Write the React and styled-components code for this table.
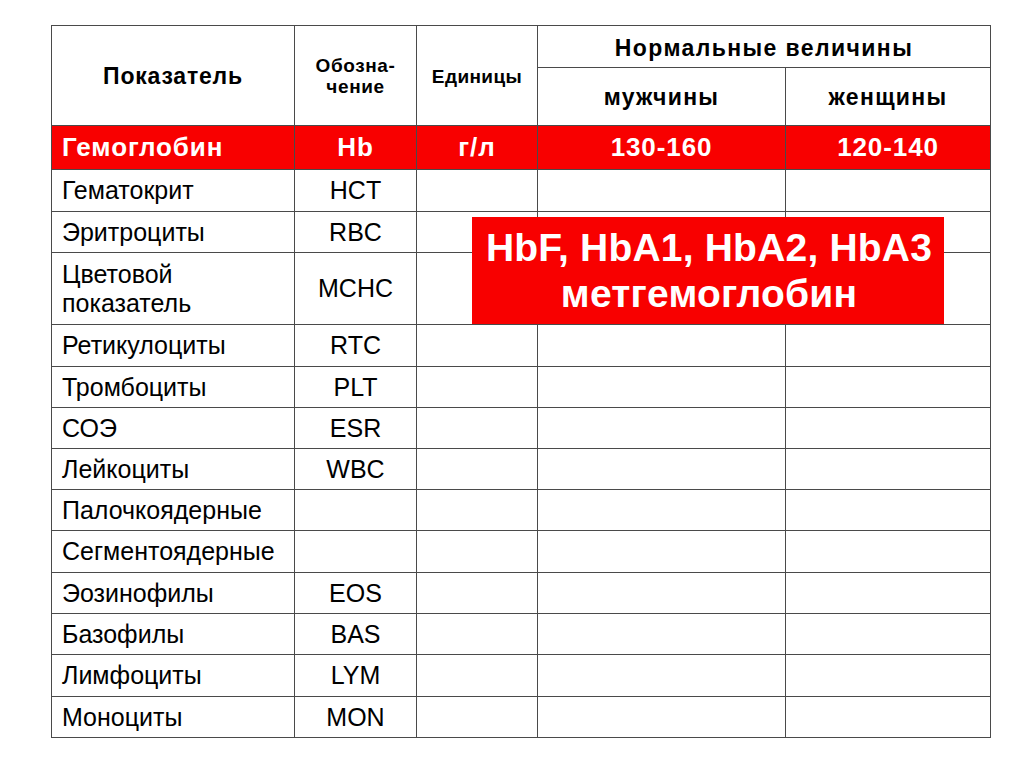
import React from "react";
import styled, { createGlobalStyle } from "styled-components";

const GlobalStyle = createGlobalStyle`
    html, body {
        margin: 0;
        padding: 0;
        background: #fff;
    }
    body {
        font-family: "Liberation Sans", Arial, sans-serif;
        color: #000;
    }
`

const Page = styled.div`
    width: 1024px;
    height: 768px;
    padding: 25px 0 0 51px;
    box-sizing: border-box;
`

const TableWrap = styled.div`
    position: relative;
    width: 939px;
`

const Table = styled.table`
    border-collapse: collapse;
    table-layout: fixed;
    width: 939px;
`

const Cell = styled.td`
    border: 1px solid #4a4a4a;
    padding: 0 10px;
    font-size: 25px;
    line-height: 29px;
    text-align: ${p => (p.$left ? "left" : "center")};
    vertical-align: middle;
`

const HeadCell = styled.th`
    border: 1px solid #4a4a4a;
    padding: ${p => p.$pt || 0}px 0 0;
    font-weight: bold;
    font-size: ${p => p.$size}px;
    line-height: ${p => p.$lh || p.$size + 3}px;
    letter-spacing: ${p => p.$ls || 0}px;
    text-align: center;
    vertical-align: ${p => p.$valign || "middle"};
`

const Row = styled.tr`
    height: ${p => p.$h}px;
`

const RedRow = styled.tr`
    height: 44px;
    background: #f80000;
    color: #fff;

    td {
        font-weight: bold;
        font-size: 26px;
        letter-spacing: 0.9px;
    }
`

const Overlay = styled.div`
    position: absolute;
    left: 421px;
    top: 192px;
    width: 472px;
    height: 107px;
    background: #f80000;
    color: #fff;
    font-weight: bold;
    font-size: 39px;
    line-height: 46px;
    letter-spacing: 0.2px;
    display: flex;
    flex-direction: column;
    align-items: center;
    justify-content: center;
    padding-left: 2px;
    box-sizing: border-box;
`

const rows = [
    ["Гематокрит", "HCT", 42],
    ["Эритроциты", "RBC", 41],
    ["Цветовой\nпоказатель", "MCHC", 72],
    ["Ретикулоциты", "RTC", 42],
    ["Тромбоциты", "PLT", 41],
    ["СОЭ", "ESR", 41],
    ["Лейкоциты", "WBC", 41],
    ["Палочкоядерные", "", 41],
    ["Сегментоядерные", "", 42],
    ["Эозинофилы", "EOS", 41],
    ["Базофилы", "BAS", 41],
    ["Лимфоциты", "LYM", 42],
    ["Моноциты", "MON", 41],
];

export default function App() {
    return (
        <Page>
            <GlobalStyle />
            <TableWrap>
                <Table>
                    <colgroup>
                        <col style={{ width: 243 }} />
                        <col style={{ width: 122 }} />
                        <col style={{ width: 121 }} />
                        <col style={{ width: 248 }} />
                        <col style={{ width: 205 }} />
                    </colgroup>
                    <thead>
                        <Row $h={42}>
                            <HeadCell rowSpan={2} $size={23} $ls={0.8}>Показатель</HeadCell>
                            <HeadCell rowSpan={2} $size={19} $lh={21} $ls={0.6} $valign="top" $pt={29}>
                                Обозна-<br />чение
                            </HeadCell>
                            <HeadCell rowSpan={2} $size={19} $lh={22} $ls={0.4} $valign="top" $pt={40}>
                                Единицы
                            </HeadCell>
                            <HeadCell colSpan={2} $size={23} $ls={1.4} $pt={3}>Нормальные величины</HeadCell>
                        </Row>
                        <Row $h={58}>
                            <HeadCell $size={23} $ls={1.3}>мужчины</HeadCell>
                            <HeadCell $size={23} $ls={1.3}>женщины</HeadCell>
                        </Row>
                    </thead>
                    <tbody>
                        <RedRow>
                            <Cell $left>Гемоглобин</Cell>
                            <Cell>Hb</Cell>
                            <Cell>г/л</Cell>
                            <Cell>130-160</Cell>
                            <Cell>120-140</Cell>
                        </RedRow>
                        {rows.map(([name, code, h]) => (
                            <Row key={name} $h={h}>
                                <Cell $left>
                                    {name.split("\n").map((line, i) => (
                                        <div key={i}>{line}</div>
                                    ))}
                                </Cell>
                                <Cell>{code}</Cell>
                                <Cell />
                                <Cell />
                                <Cell />
                            </Row>
                        ))}
                    </tbody>
                </Table>
                <Overlay>
                    <div>HbF, HbA1, HbA2, HbA3</div>
                    <div>метгемоглобин</div>
                </Overlay>
            </TableWrap>
        </Page>
    );
}
